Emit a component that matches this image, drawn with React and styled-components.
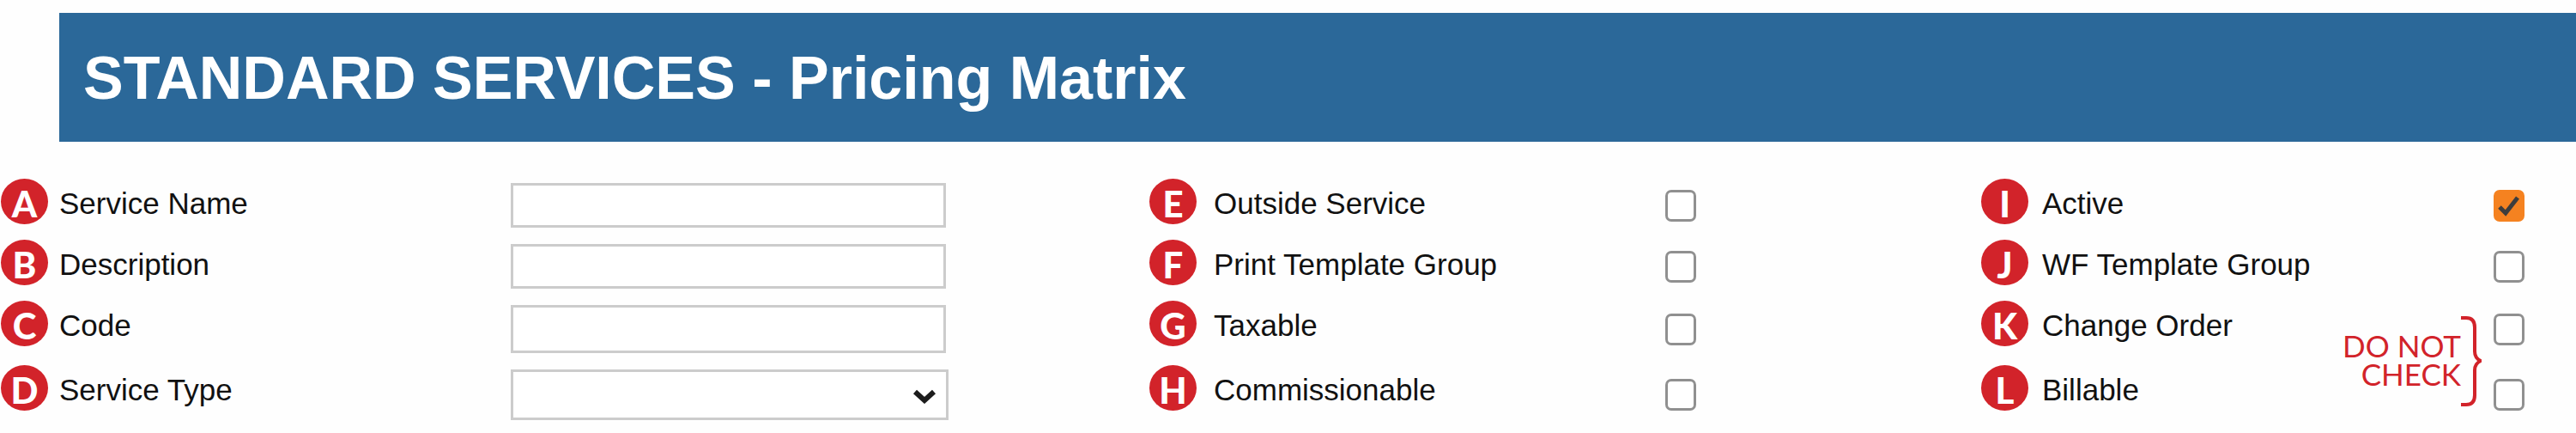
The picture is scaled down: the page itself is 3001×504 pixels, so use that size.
import React from 'react'
import styled, { createGlobalStyle } from 'styled-components'


const GlobalStyle = createGlobalStyle`
    * {
        box-sizing: border-box;
    }
    body {
        margin: 0;
        background: #fefefe;
        color: #111;
        font-family: "Liberation Sans", Arial, sans-serif;
    }
`

const Page = styled.main`
    padding-top: 15px;
`

const Banner = styled.header`
    margin-left: 69px;
    padding: 36px 28px 34px;
    background: #2b6899;
`

const Title = styled.h1`
    margin: 0;
    color: #fff;
    font-size: 70px;
    font-weight: 700;
    line-height: 80px;
`

const Form = styled.form`
    display: grid;
    grid-template-columns: 1338fr 969fr 694fr;
    margin-top: 48px;
`

const Group = styled.div`
    position: relative;
    display: flex;
    flex-direction: column;
    gap: 19px;
    padding-left: 1px;
`

const Field = styled.div`
    display: grid;
    grid-template-columns: ${({$gutter})=>$gutter}px minmax(0, 526px) 1fr;
    height: ${({$height})=>$height}px;
`

const Badge = styled.span`
    display: flex;
    align-items: center;
    justify-content: center;
    width: 55px;
    height: 53px;
    margin-top: -5px;
    padding-top: 4px;
    border-radius: 50%;
    background: #d2232a;
    color: #fff;
    font-family: Lato, sans-serif;
    font-size: 42px;
    font-weight: 900;
    line-height: 48px;
`

const Label = styled.label`
    font-size: 35px;
    line-height: 48px;
`

const TextInput = styled.input`
    width: 100%;
    max-width: 507px;
    height: 100%;
    padding: 0 12px;
    border: 3px solid #ccc;
    border-radius: 0;
    background: #fff;
    font: inherit;
    font-size: 35px;
`

const SelectWrapper = styled.div`
    position: relative;
    max-width: 510px;
`

const Select = styled.select`
    width: 100%;
    height: 100%;
    padding: 0 60px 0 12px;
    border: 3px solid #ccc;
    border-radius: 0;
    background: #fff;
    appearance: none;
    font: inherit;
    font-size: 35px;
`

const Arrow = styled.svg`
    position: absolute;
    top: 22px;
    right: 13px;
    pointer-events: none;
`

const CheckWrapper = styled.div`
    position: relative;
    align-self: center;
    width: 36px;
    height: 37px;
`

const Checkbox = styled.input`
    display: block;
    width: 100%;
    height: 100%;
    margin: 0;
    border: 3px solid #909090;
    border-radius: 7px;
    background: #fff;
    appearance: none;

    &:checked {
        border-color: #f58220;
        background: #f58220;
    }

    & + svg {
        display: none;
    }

    &:checked + svg {
        display: block;
    }
`

const Tick = styled.svg`
    position: absolute;
    inset: 0;
    pointer-events: none;
`

const Note = styled.div`
    position: absolute;
    top: 154px;
    left: 0;
    display: flex;
    align-items: center;
    justify-content: flex-end;
    width: 584px;
    color: #d2232a;
    pointer-events: none;
`

const NoteText = styled.span`
    padding-bottom: 4px;
    font-family: Lato, sans-serif;
    font-size: 35px;
    line-height: 33px;
    text-align: right;
`


const rowHeights = [52, 52, 56, 59]

const textFields = [
  { letter: 'A', id: 'serviceName', label: 'Service Name' },
  { letter: 'B', id: 'description', label: 'Description' },
  { letter: 'C', id: 'code', label: 'Code' },
  { letter: 'D', id: 'serviceType', label: 'Service Type', select: true },
]

const serviceFlags = [
  { letter: 'E', id: 'outsideService', label: 'Outside Service' },
  { letter: 'F', id: 'printTemplateGroup', label: 'Print Template Group' },
  { letter: 'G', id: 'taxable', label: 'Taxable' },
  { letter: 'H', id: 'commissionable', label: 'Commissionable' },
]

const statusFlags = [
  { letter: 'I', id: 'active', label: 'Active', checked: true },
  { letter: 'J', id: 'wfTemplateGroup', label: 'WF Template Group' },
  { letter: 'K', id: 'changeOrder', label: 'Change Order' },
  { letter: 'L', id: 'billable', label: 'Billable' },
]

const TextControl = ({ field }) => {
  if (!field.select) return <TextInput id={field.id} type="text" />
  return (
    <SelectWrapper>
        <Select id={field.id} defaultValue="">
            <option value=""></option>
        </Select>
        <Arrow width="30" height="18" viewBox="0 0 30 18" fill="none">
            <path d="M4 4l11 10L26 4" stroke="#1c1c1c" strokeWidth="6" />
        </Arrow>
    </SelectWrapper>
  )
}

const CheckControl = ({ field }) => (
    <CheckWrapper>
        <Checkbox id={field.id} type="checkbox" defaultChecked={field.checked} />
        <Tick viewBox="0 0 36 37" fill="none">
            <path d="M7 20l7 7L28 9" stroke="#3d3d3d" strokeWidth="5" />
        </Tick>
    </CheckWrapper>
)

const FieldGroup = ({ fields, gutter, control: Control, children }) => (
    <Group>
        {fields.map((field, i) => (
            <Field key={field.id} $gutter={gutter} $height={rowHeights[i]}>
                <Badge>{field.letter}</Badge>
                <Label htmlFor={field.id}>{field.label}</Label>
                <Control field={field} />
            </Field>
        ))}
        {children}
    </Group>
)

const App = () => {
  return (
    <Page>
        <GlobalStyle/>
        <Banner>
            <Title>STANDARD SERVICES - Pricing Matrix</Title>
        </Banner>
        <Form>
            <FieldGroup fields={textFields} gutter={68} control={TextControl}/>
            <FieldGroup fields={serviceFlags} gutter={75} control={CheckControl}/>
            <FieldGroup fields={statusFlags} gutter={71} control={CheckControl}>
                <Note>
                    <NoteText>DO NOT<br/>CHECK</NoteText>
                    <svg width="24" height="107" viewBox="0 0 24 107" fill="none">
                        <path
                            d="M0 3h6q10 0 10 11v28q0 8 7 11q-7 3-7 11v29q0 11-10 11H0"
                            stroke="#d2232a"
                            strokeWidth="4"
                        />
                    </svg>
                </Note>
            </FieldGroup>
        </Form>
    </Page>
  )
}

export default App
